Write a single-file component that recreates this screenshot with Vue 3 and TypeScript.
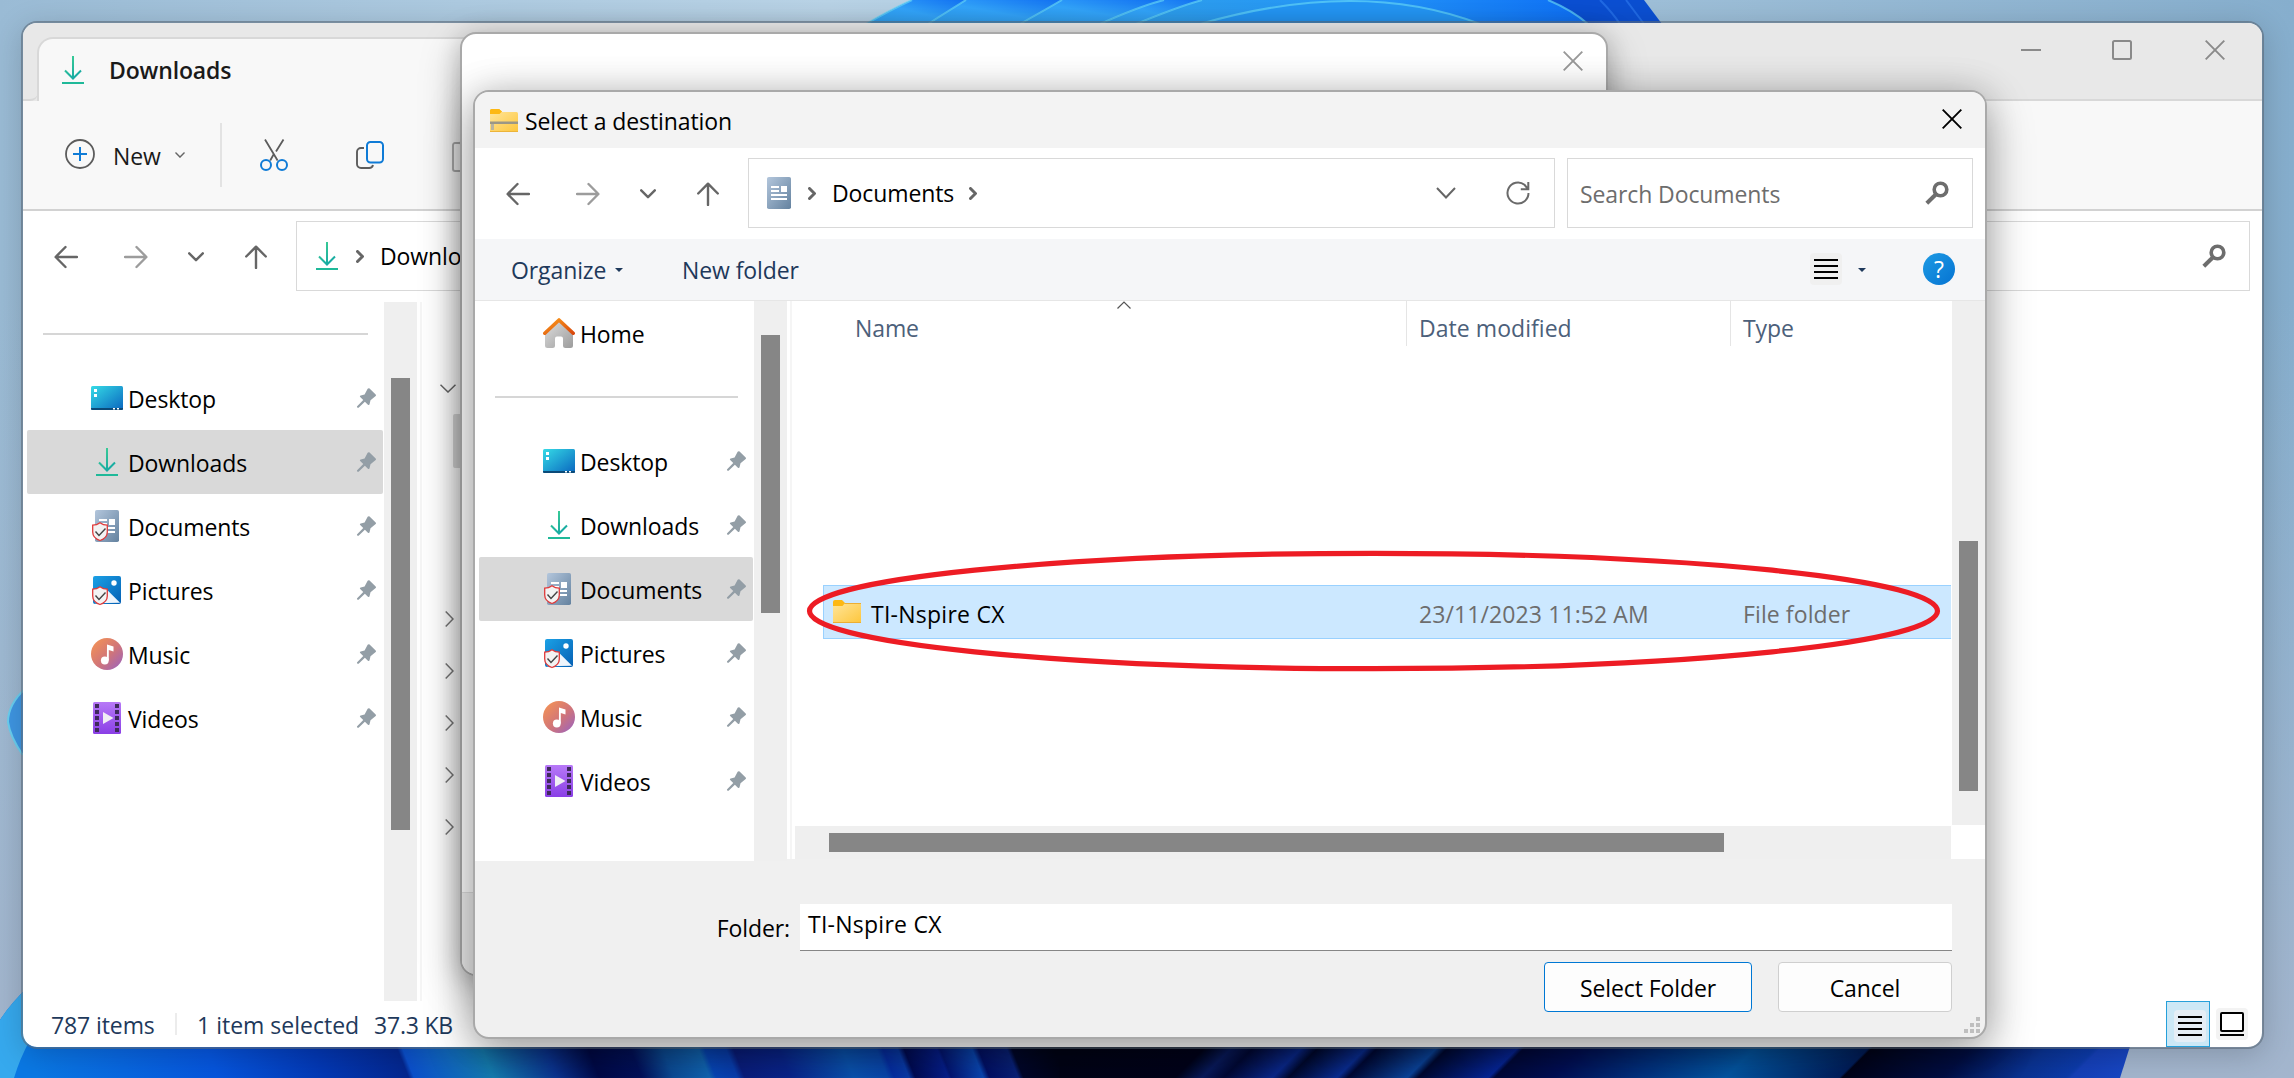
<script setup lang="ts">
interface NavItem {
  label: string
  icon: string
  pinned: boolean
}

const quickAccess: NavItem[] = [
  { label: 'Desktop', icon: 'desktop', pinned: true },
  { label: 'Downloads', icon: 'download', pinned: true },
  { label: 'Documents', icon: 'document-sync', pinned: true },
  { label: 'Pictures', icon: 'pictures-sync', pinned: true },
  { label: 'Music', icon: 'music', pinned: true },
  { label: 'Videos', icon: 'videos', pinned: true },
]

const collapsedGroups: number[] = [1, 2, 3, 4, 5]
const gripRows: number[] = [1, 2, 3]
</script>

<template>
  <div class="desktop">
    <!-- Shared icon shapes -->
    <svg class="defs" width="0" height="0" aria-hidden="true">
      <defs>
        <linearGradient id="gDown2" gradientUnits="userSpaceOnUse" x1="6" y1="2" x2="24" y2="28"><stop offset="0" stop-color="#42d392" /><stop offset="1" stop-color="#0a9fa8" /></linearGradient>
        <linearGradient id="gDesk" x1="0" y1="0" x2="1" y2="1"><stop offset="0" stop-color="#35dbe6" /><stop offset="1" stop-color="#0a66bf" /></linearGradient>
        <linearGradient id="gDoc" x1="0" y1="0" x2="1" y2="1"><stop offset="0" stop-color="#b3c6dc" /><stop offset="1" stop-color="#64829f" /></linearGradient>
        <linearGradient id="gPic" x1="0" y1="0" x2="1" y2="1"><stop offset="0" stop-color="#1ba1e6" /><stop offset="1" stop-color="#0560b4" /></linearGradient>
        <linearGradient id="gMusic" x1="0.1" y1="0.1" x2="0.9" y2="0.9"><stop offset="0" stop-color="#f19058" /><stop offset="0.55" stop-color="#d17578" /><stop offset="1" stop-color="#a366b4" /></linearGradient>
        <linearGradient id="gVid" x1="0" y1="0" x2="0" y2="1"><stop offset="0" stop-color="#b779f7" /><stop offset="1" stop-color="#8a3fe6" /></linearGradient>
        <linearGradient id="gRoof" x1="0" y1="0" x2="1" y2="1"><stop offset="0" stop-color="#fb9a1c" /><stop offset="1" stop-color="#d9480c" /></linearGradient>
        <linearGradient id="gWall" x1="0" y1="0" x2="1" y2="1"><stop offset="0" stop-color="#dedede" /><stop offset="1" stop-color="#9c9c9c" /></linearGradient>
        <linearGradient id="gFold" x1="0" y1="0" x2="1" y2="1"><stop offset="0" stop-color="#ffe59a" /><stop offset="1" stop-color="#fdc63c" /></linearGradient>

        <symbol id="i-download" viewBox="0 0 32 32">
          <path d="M16 2v22M8 16.5l8 8 8-8" fill="none" stroke="url(#gDown2)" stroke-width="2" />
          <path d="M5 28h22v2H5z" fill="#1fb999" />
        </symbol>
        <symbol id="i-desktop" viewBox="0 0 32 32">
          <rect y="4" width="32" height="24" rx="1.5" fill="url(#gDesk)" />
          <path d="M0 26h32v.8a1.2 1.2 0 0 1-1.2 1.2H1.200A1.200 1.200 0 0 1 0 26.800z" fill="#0b4a78" />
          <path d="M3 7h3v3H3zM3 12h3v3H3zM22 26h2v1.500h-2zM26 26h2v1.500h-2z" fill="#fff" />
        </symbol>
        <symbol id="i-document" viewBox="0 0 32 32">
          <rect x="4" width="24" height="32" rx="1.800" fill="url(#gDoc)" />
          <path d="M8 9h8v2H8zM8 13h8v2H8zM18 9h6v6h-6zM8 17h16v2H8zM8 21h16v2H8z" fill="#fff" />
        </symbol>
        <symbol id="i-shield" viewBox="0 0 32 32">
          <path d="M9 12.700c-2.300 1.700-4.600 2.400-7.300 2.500v6.800c0 4 3 7 7.300 8.500 4.300-1.500 7.300-4.500 7.300-8.500v-6.800c-2.700-.1-5-.8-7.300-2.500z" fill="#f3f3f3" stroke="#e03a3a" stroke-width="1.300" />
          <path d="M4.500 21.500l3.500 4 6.500-7" fill="none" stroke="#444" stroke-width="1.400" />
        </symbol>
        <symbol id="i-document-sync" viewBox="0 0 32 32">
          <use href="#i-document" /><use href="#i-shield" />
        </symbol>
        <symbol id="i-pictures-sync" viewBox="0 0 32 32">
          <rect x="2" y="2" width="28" height="28" rx="2" fill="url(#gPic)" />
          <circle cx="23" cy="9" r="2.700" fill="#fff" />
          <path d="M4 29.200L17 16.800l12 11.900z" fill="#eef5fc" />
          <use href="#i-shield" />
        </symbol>
        <symbol id="i-music" viewBox="0 0 32 32">
          <circle cx="16" cy="16" r="16" fill="url(#gMusic)" />
          <path d="M16 6.500l6.500 2v5L17.800 12v10.500h-1.900z" fill="#fff" />
          <circle cx="13.800" cy="22.500" r="3.900" fill="#fff" />
        </symbol>
        <symbol id="i-videos" viewBox="0 0 32 32">
          <rect x="2" width="28" height="32" rx="1.500" fill="url(#gVid)" />
          <path d="M4 2h4v4H4zM4 8h4v4H4zM4 14h4v4H4zM4 20h4v4H4zM4 26h4v4H4zM24 2h4v4h-4zM24 8h4v4h-4zM24 14h4v4h-4zM24 20h4v4h-4zM24 26h4v4h-4z" fill="#3f2a5c" />
          <path d="M12 10l10.500 6L12 22z" fill="#f0eef4" />
        </symbol>
        <symbol id="i-home" viewBox="0 0 32 32">
          <path d="M2 14L16 4l14 10v14.500a2.500 2.500 0 0 1-2.500 2.500h-5a2.500 2.500 0 0 1-2.500-2.500v-7a2 2 0 0 0-2-2h-4a2 2 0 0 0-2 2v7A2.500 2.500 0 0 1 9.500 31h-5A2.500 2.500 0 0 1 2 28.500z" fill="url(#gWall)" />
          <path d="M1.800 16.200L16 3l14.200 13.200" fill="none" stroke="url(#gRoof)" stroke-width="3.600" stroke-linecap="round" stroke-linejoin="round" />
        </symbol>
        <symbol id="i-pin" viewBox="0 0 22 22">
          <path d="M12.200.8c.6-.8 1.400-.8 2-.2l6.400 6.300c.6.600.5 1.300-.3 1.800l-5.100 4.100-1 4.200c-.2.900-1 1.200-1.700.5l-3.200-3.200-6.600 6.300c-.8.700-2.300-.6-1.500-1.500l6.400-6.600-3.200-3.100c-.6-.7-.3-1.500.6-1.600l4-.9z" fill="#939ea6" />
        </symbol>
        <symbol id="i-back" viewBox="0 0 24 24">
          <path d="M23 12H2M11.500 2L1.600 12l9.900 10" fill="none" stroke="currentColor" stroke-width="2.400" stroke-linecap="round" stroke-linejoin="round" />
        </symbol>
        <symbol id="i-up" viewBox="0 0 22 24">
          <path d="M11 23V2M1.200 11.500L11 1.700l9.800 9.800" fill="none" stroke="currentColor" stroke-width="2.400" stroke-linecap="round" stroke-linejoin="round" />
        </symbol>
        <symbol id="i-chev-down" viewBox="0 0 16 10">
          <path d="M1.200 1.300L8 8.200l6.800-6.900" fill="none" stroke="currentColor" stroke-width="2.400" stroke-linecap="round" stroke-linejoin="round" />
        </symbol>
        <symbol id="i-chev-bold" viewBox="0 0 8 13">
          <path d="M1.500 1.500l5 5-5 5" fill="none" stroke="currentColor" stroke-width="3" stroke-linecap="round" />
        </symbol>
        <symbol id="i-search" viewBox="0 0 24 24">
          <circle cx="15.500" cy="8.500" r="6.300" fill="none" stroke="currentColor" stroke-width="3.600" />
          <path d="M11 13.200L1.800 22.200" fill="none" stroke="currentColor" stroke-width="4" />
        </symbol>
        <symbol id="i-close" viewBox="0 0 20 20">
          <path d="M.7.7l18.600 18.600M19.300.7L.7 19.300" fill="none" stroke="currentColor" stroke-width="1.900" />
        </symbol>
        <symbol id="i-lines" viewBox="0 0 32 32">
          <path d="M4 6h24v2H4zM4 12h24v2H4zM4 18h24v2H4zM4 24h24v2H4z" fill="#000" />
        </symbol>
      </defs>
    </svg>

    <!-- Desktop wallpaper -->
    <svg class="wallpaper" width="2294" height="1078" viewBox="0 0 2294 1078">
      <defs>
        <linearGradient id="sky" x1="0" y1="0" x2="1" y2="0">
          <stop offset="0" stop-color="#9abbd5" /><stop offset="0.2" stop-color="#adcae0" /><stop offset="0.36" stop-color="#b9d3e6" /><stop offset="0.72" stop-color="#9ebfd8" /><stop offset="1" stop-color="#86aecd" />
        </linearGradient>
        <linearGradient id="skyLow" x1="0" y1="0" x2="0" y2="1">
          <stop offset="0" stop-color="#a3b8d0" stop-opacity="0" /><stop offset="1" stop-color="#a3b5cd" stop-opacity="1" />
        </linearGradient>
        <linearGradient id="petal" x1="0" y1="1" x2="1" y2="0">
          <stop offset="0" stop-color="#2f9fee" /><stop offset="0.5" stop-color="#33a5fb" /><stop offset="1" stop-color="#1270f2" />
        </linearGradient>
        <linearGradient id="petalWide" x1="0" y1="0" x2="1" y2="0">
          <stop offset="0" stop-color="#2f9fec" /><stop offset="0.5" stop-color="#2496f8" /><stop offset="1" stop-color="#0f70f6" />
        </linearGradient>
        <linearGradient id="lowLeft" gradientUnits="userSpaceOnUse" x1="0" y1="0" x2="1060" y2="0" gradientTransform="translate(-425 0) skewX(21.8)">
          <stop offset="0.03" stop-color="#0a78e4" /><stop offset="0.2" stop-color="#0655dc" /><stop offset="0.3" stop-color="#0338b4" /><stop offset="0.38" stop-color="#04278f" />
          <stop offset="0.385" stop-color="#0b50cc" /><stop offset="0.46" stop-color="#167fb4" /><stop offset="0.52" stop-color="#0c3696" /><stop offset="0.56" stop-color="#020b4c" /><stop offset="0.6" stop-color="#04125e" />
          <stop offset="0.63" stop-color="#0d4f9c" /><stop offset="0.664" stop-color="#1268b8" /><stop offset="0.67" stop-color="#0848bc" /><stop offset="0.69" stop-color="#0a40b4" /><stop offset="0.697" stop-color="#0b1f82" /><stop offset="0.74" stop-color="#0a2690" /><stop offset="0.8" stop-color="#0b55b4" />
          <stop offset="0.832" stop-color="#0a48b0" /><stop offset="0.838" stop-color="#0730a8" /><stop offset="0.852" stop-color="#0a3cac" /><stop offset="0.858" stop-color="#030d58" /><stop offset="0.889" stop-color="#072090" /><stop offset="0.892" stop-color="#051878" />
          <stop offset="0.922" stop-color="#0b49b8" /><stop offset="0.928" stop-color="#04126a" /><stop offset="0.955" stop-color="#0a237c" /><stop offset="0.96" stop-color="#02082c" /><stop offset="1" stop-color="#010518" />
        </linearGradient>
        <linearGradient id="lowRight" gradientUnits="userSpaceOnUse" x1="1060" y1="0" x2="2140" y2="0" gradientTransform="translate(1063 0) skewX(-45)">
          <stop offset="0" stop-color="#010518" /><stop offset="0.12" stop-color="#01041c" /><stop offset="0.145" stop-color="#0a1c60" /><stop offset="0.165" stop-color="#030a38" /><stop offset="0.21" stop-color="#0b2a90" /><stop offset="0.225" stop-color="#020a30" />
          <stop offset="0.27" stop-color="#0b2f98" /><stop offset="0.28" stop-color="#020a38" /><stop offset="0.335" stop-color="#0c46a0" /><stop offset="0.345" stop-color="#020a34" /><stop offset="0.41" stop-color="#07279c" /><stop offset="0.416" stop-color="#020a3c" />
          <stop offset="0.47" stop-color="#021058" /><stop offset="0.55" stop-color="#033484" /><stop offset="0.63" stop-color="#0559a8" /><stop offset="0.735" stop-color="#032060" /><stop offset="0.738" stop-color="#01051c" />
          <stop offset="0.83" stop-color="#020f46" /><stop offset="0.9" stop-color="#0a3290" /><stop offset="0.945" stop-color="#0c3aa8" /><stop offset="0.95" stop-color="#153fb6" /><stop offset="1" stop-color="#1747c4" />
        </linearGradient>
      </defs>
      <rect width="2294" height="1078" fill="url(#sky)" />
      <rect y="300" width="2294" height="778" fill="url(#skyLow)" />
      <path d="M866 24Q890 10 912 0H1644L1662 24z" fill="#0b4fd2" />
      <path d="M866 24Q890 10 912 0H966Q950 10 928 24z" fill="url(#petal)" />
      <path d="M928 24Q950 10 966 0H1062Q1045 10 1020 24z" fill="url(#petal)" />
      <path d="M1020 24Q1045 10 1062 0H1164Q1140 6 1100 24z" fill="url(#petal)" />
      <path d="M1100 24Q1140 6 1164 0H1202Q1180 6 1136 24z" fill="url(#petal)" />
      <path d="M1136 24Q1180 6 1202 0H1548Q1572 10 1588 24z" fill="url(#petalWide)" />
      <path d="M1200 24Q1360 -22 1480 24z" fill="#2496f4" />
      <path d="M866 24Q890 10 912 0M928 24Q950 10 966 0M1020 24Q1045 10 1062 0M1100 24Q1140 6 1164 0M1136 24Q1180 6 1202 0M1200 24Q1360 -22 1480 24M1548 0Q1572 10 1588 24" fill="none" stroke="#62d4f8" stroke-opacity="0.7" stroke-width="2" />
      <path d="M1600 0Q1612 12 1620 24M1626 0L1644 24" fill="none" stroke="#2f7cf0" stroke-opacity="0.6" stroke-width="2" />
      <path d="M26 688Q8 704 8 722q2 14 14 32h6z" fill="#3f97e4" stroke="#6ad0f2" stroke-width="2" />
      <path d="M0 1020Q10 1004 30 985V1040H1060V1078H0z" fill="url(#lowLeft)" />
      <path d="M0 1020Q10 1004 30 985V1040Q20 1058 14 1078H0z" fill="#36a9ee" />
      <path d="M1059 1040H2132L2120 1078H1059z" fill="url(#lowRight)" />
    </svg>

    <!-- Explorer window -->
    <section class="window explorer">
      <header class="tabstrip">
        <div class="tab-lead"></div>
        <div class="tab">
          <svg width="32" height="32"><use href="#i-download" /></svg>
          <span>Downloads</span>
        </div>
        <div class="captions">
          <svg width="20" height="20"><path d="M0 10h20" stroke="#8a8a8a" stroke-width="2" /></svg>
          <svg class="max" width="20" height="20"><rect x="1" y="1" width="18" height="18" rx="1.500" fill="none" stroke="#8a8a8a" stroke-width="2" /></svg>
          <svg width="20" height="20"><use href="#i-close" /></svg>
        </div>
      </header>

      <div class="commands">
        <svg class="plus" width="30" height="30" viewBox="0 0 30 30" fill="none">
          <circle cx="15" cy="15" r="14" stroke="#5c5c5c" stroke-width="1.800" />
          <path d="M15 8v14M8 15h14" stroke="#0f7bd6" stroke-width="2" />
        </svg>
        <span class="new">New</span>
        <svg class="new-chev" width="10" height="6" viewBox="0 0 10 6"><path d="M.5.6L5 5.100 9.500.6" fill="none" stroke="#666" stroke-width="1.400" /></svg>
        <i class="divider"></i>
        <svg class="cut" width="28" height="32" viewBox="0 0 28 32" fill="none">
          <path d="M5 .5l12.600 21M23.500.5L16 12.500M13.600 15.500L10.200 21.500" stroke="#5c5c5c" stroke-width="1.800" />
          <circle cx="6" cy="26" r="5" stroke="#0f7bd6" stroke-width="2" /><circle cx="22" cy="26" r="5" stroke="#0f7bd6" stroke-width="2" />
        </svg>
        <svg class="copy" width="28" height="28" viewBox="0 0 28 28" fill="none">
          <path d="M8 7H5a4 4 0 0 0-4 4v12a4 4 0 0 0 4 4h8a4 4 0 0 0 4-3" stroke="#5c5c5c" stroke-width="1.900" />
          <rect x="11" y="1" width="16" height="20.500" rx="3.500" stroke="#0f7bd6" stroke-width="2" />
        </svg>
        <svg class="paste" width="28" height="32" viewBox="0 0 28 32" fill="none" stroke="#ababab" stroke-width="1.900">
          <path d="M8 3H3a2 2 0 0 0-2 2v24a2 2 0 0 0 2 2h9M8 3a3 3 0 0 1 3-2h5v4h-5a3 3 0 0 1-3-2z" />
        </svg>
      </div>

      <div class="navbar">
        <svg class="ic back" width="24" height="24"><use href="#i-back" /></svg>
        <svg class="ic fwd" width="24" height="24"><use href="#i-back" /></svg>
        <svg class="ic recent" width="16" height="10"><use href="#i-chev-down" /></svg>
        <svg class="ic up" width="22" height="24"><use href="#i-up" /></svg>
        <div class="field address">
          <svg width="32" height="32"><use href="#i-download" /></svg>
          <svg class="crumb" width="8" height="13"><use href="#i-chev-bold" /></svg>
          <span>Downloads</span>
        </div>
        <div class="field search wide">
          <svg width="24" height="24"><use href="#i-search" /></svg>
        </div>
      </div>

      <div class="body">
        <nav class="sidebar">
          <div class="rule"></div>
          <div v-for="item in quickAccess" :key="item.label" class="nav-item" :class="{ selected: item.label === 'Downloads' }">
            <svg width="32" height="32"><use :href="'#i-' + item.icon" /></svg>
            <span>{{ item.label }}</span>
            <svg v-if="item.pinned" class="pin" width="21" height="21"><use href="#i-pin" /></svg>
          </div>
        </nav>
        <div class="scroll nav-scroll"><div class="thumb"></div></div>
        <div class="splitter"></div>
        <div class="groups">
          <div class="group first"><svg width="16" height="9" viewBox="0 0 16 9"><path d="M.5.700L8 8 15.500.700" fill="none" stroke="#666" stroke-width="1.500" /></svg></div>
          <div class="row-strip"></div>
          <div class="group-list">
            <div v-for="n in collapsedGroups" :key="n" class="group"><svg width="9" height="16" viewBox="0 0 9 16"><path d="M.7.500L8 8 .7 15.500" fill="none" stroke="#777" stroke-width="1.500" /></svg></div>
          </div>
        </div>
      </div>

      <footer class="status">
        <span class="count">787 items</span>
        <i></i>
        <span class="sel">1 item selected</span>
        <span class="size">37.3 KB</span>
        <div class="views">
          <div class="view active"><svg width="32" height="32"><rect width="32" height="32" rx="4" fill="#e5eef6" /><use href="#i-lines" /></svg></div>
          <div class="view"><svg width="32" height="32"><rect width="32" height="32" rx="4" fill="#f3f3f3" /><rect x="5" y="5" width="22" height="18" rx="1" fill="#fff" stroke="#000" stroke-width="2" /><path d="M4 26h24v2H4z" /></svg></div>
        </div>
      </footer>
    </section>

    <!-- Dialog partly hidden behind the picker -->
    <section class="window progress">
      <header><svg width="20" height="20"><use href="#i-close" /></svg></header>
      <footer></footer>
    </section>

    <!-- Folder picker -->
    <section class="window picker">
      <header class="title">
        <svg width="28" height="23" viewBox="0 0 28 23">
          <path d="M0 2a2 2 0 0 1 2-2h7l3 3v4H0z" fill="#fdb813" />
          <rect y="3" width="28" height="20" rx="1.500" fill="url(#gFold)" />
          <path d="M0 2a2 2 0 0 1 2-2h7l3 2.500L9.500 5H0z" fill="#fdb813" />
          <path d="M0 12.500h28v2.500H0z" fill="#9b9786" /><path d="M1 15h3v6H1z" fill="#bab49e" /><path d="M0 22h28v1H0z" fill="#ecb43a" />
        </svg>
        <span>Select a destination</span>
        <svg class="x" width="20" height="20"><use href="#i-close" /></svg>
      </header>

      <div class="navbar">
        <svg class="ic back" width="24" height="24"><use href="#i-back" /></svg>
        <svg class="ic fwd" width="24" height="24"><use href="#i-back" /></svg>
        <svg class="ic recent" width="16" height="10"><use href="#i-chev-down" /></svg>
        <svg class="ic up" width="22" height="24"><use href="#i-up" /></svg>
        <div class="field address">
          <svg width="32" height="32"><use href="#i-document" /></svg>
          <svg class="crumb" width="8" height="13"><use href="#i-chev-bold" /></svg>
          <span>Documents</span>
          <svg class="crumb tail" width="8" height="13"><use href="#i-chev-bold" /></svg>
          <svg class="drop" width="20" height="12" viewBox="0 0 20 12"><path d="M1 1l9 9.500L19 1" fill="none" stroke="#666" stroke-width="2" /></svg>
          <svg class="refresh" width="24" height="24" viewBox="0 0 24 24"><path d="M22.500 12A10.500 10.500 0 1 1 18.500 3.800L21.500 7.500M22.300 1v7.300h-7.500" fill="none" stroke="#6a6a6a" stroke-width="2" /></svg>
        </div>
        <div class="field search">
          <span>Search Documents</span>
          <svg width="24" height="24"><use href="#i-search" /></svg>
        </div>
      </div>

      <div class="toolbar">
        <span class="organize">Organize</span>
        <svg class="caret" width="8" height="4"><path d="M0 0h8L4 4z" fill="#1e395b" /></svg>
        <span class="new-folder">New folder</span>
        <svg class="list" width="32" height="32"><rect width="32" height="32" rx="4" fill="#f0f0f0" /><use href="#i-lines" /></svg>
        <svg class="caret" width="8" height="4"><path d="M0 0h8L4 4z" fill="#1e395b" /></svg>
        <div class="help">?</div>
      </div>

      <div class="body">
        <nav class="sidebar">
          <div class="nav-item">
            <svg width="32" height="32"><use href="#i-home" /></svg>
            <span>Home</span>
          </div>
          <div class="rule"></div>
          <div v-for="item in quickAccess" :key="item.label" class="nav-item" :class="{ selected: item.label === 'Documents' }">
            <svg width="32" height="32"><use :href="'#i-' + item.icon" /></svg>
            <span>{{ item.label }}</span>
            <svg v-if="item.pinned" class="pin" width="21" height="21"><use href="#i-pin" /></svg>
          </div>
        </nav>
        <div class="scroll nav-scroll"><div class="thumb"></div></div>
        <div class="splitter"></div>
        <div class="files">
          <div class="files-main">
            <div class="columns">
              <div class="col name">Name
                <svg class="sort" width="14" height="8" viewBox="0 0 14 8"><path d="M.5 7.500L7 1l6.500 6.500" fill="none" stroke="#555" stroke-width="1.200" /></svg>
              </div>
              <div class="col date">Date modified</div>
              <div class="col type">Type</div>
            </div>
            <div class="file">
              <svg width="28" height="23" viewBox="0 0 28 23">
                <rect y="3" width="28" height="20" rx="1.500" fill="url(#gFold)" />
                <path d="M0 2a2 2 0 0 1 2-2h7l3 3-2.500 3H0z" fill="#fdb813" />
                <path d="M12 3h16v1H11zM0 22h28v1H0z" fill="#ecae33" />
              </svg>
              <span class="fname">TI-Nspire CX</span>
              <span class="fdate">23/11/2023 11:52 AM</span>
              <span class="ftype">File folder</span>
            </div>
            <div class="hscroll"><div class="thumb"></div></div>
          </div>
          <div class="vside">
            <div class="scroll vscroll"><div class="thumb"></div></div>
          </div>
        </div>
      </div>

      <footer class="actions">
        <div class="name-row">
          <label>Folder:</label>
          <div class="input">TI-Nspire CX</div>
        </div>
        <div class="buttons">
          <button class="primary">Select Folder</button>
          <button>Cancel</button>
        </div>
        <div class="grip">
          <div v-for="r in gripRows" :key="r"><b v-for="c in r" :key="c"></b></div>
        </div>
      </footer>

      <svg class="marker" width="1136" height="124" viewBox="0 0 1136 124">
        <ellipse cx="568.500" cy="62" rx="564" ry="57.700" fill="none" stroke="#ed1c24" stroke-width="5.200" />
      </svg>
    </section>
  </div>
</template>

<style>
body {
  margin: 0;
  overflow: hidden;
}
</style>

<style scoped>
* {
  box-sizing: border-box;
}
.desktop {
  position: relative;
  width: 2294px;
  height: 1078px;
  overflow: hidden;
  font-family: 'Open Sans', 'Noto Sans', sans-serif;
  font-size: 23px;
  line-height: 32px;
  letter-spacing: -0.1px;
  color: #000;
  white-space: nowrap;
}
svg {
  flex: none;
  display: block;
}
.defs,
.wallpaper {
  position: absolute;
  left: 0;
  top: 0;
}
.window {
  position: absolute;
  display: flex;
  flex-direction: column;
  border-radius: 16px;
  background-clip: padding-box;
  overflow: hidden;
}

/* Explorer */
.explorer {
  left: 21px;
  top: 21px;
  width: 2243px;
  height: 1028px;
  background-color: #fff;
  border: 2px solid rgba(90, 105, 120, 0.6);
  box-shadow: 0 6px 30px rgba(0, 0, 0, 0.18);
}
.tabstrip {
  height: 78px;
  display: flex;
  background: #e8e8e8;
  flex: none;
}
.tab-lead {
  width: 15px;
  border-bottom: 2px solid #d8d8d8;
  border-bottom-right-radius: 8px;
}
.tab {
  margin-top: 14px;
  margin-left: -1px;
  width: 900px;
  border: 2px solid #d8d8d8;
  border-bottom: 0;
  border-radius: 16px 16px 0 0;
  background: #f8f8f8;
  display: flex;
  align-items: center;
  padding: 0 0 0 18px;
  font-weight: 600;
  color: #1a1a1a;
}
.tab span {
  margin-left: 20px;
  letter-spacing: -0.15px;
}
.captions {
  flex: 1;
  display: flex;
  justify-content: flex-end;
  gap: 72px;
  padding: 17px 37px 0 0;
  border-bottom: 2px solid #d8d8d8;
  color: #8a8a8a;
}
.max {
  margin: 0 1px 0 -1px;
}
.commands {
  height: 110px;
  flex: none;
  background: #f8f8f8;
  border-bottom: 2px solid #d2d2d2;
  display: flex;
  align-items: flex-start;
  padding: 22px 0 0 42px;
}
.plus {
  margin-top: 16px;
}
.new {
  margin: 17px 0 0 18px;
  width: 49px;
  color: #1a1a1a;
}
.new-chev {
  margin: 29px 0 0 13px;
}
.divider {
  width: 2px;
  height: 64px;
  margin-left: 35px;
  background: #e3e3e3;
}
.cut {
  margin: 16px 0 0 38px;
}
.copy {
  margin: 18px 0 0 68px;
}
.paste {
  margin: 17px 0 0 68px;
}

/* Navigation bar shared by both windows */
.navbar {
  height: 91px;
  flex: none;
  display: flex;
  align-items: center;
  padding: 0 12px 1px 31px;
  background: #fff;
}
.ic {
  color: #666;
  position: relative;
  top: 1px;
}
.fwd {
  margin-left: 46px;
  transform: scaleX(-1);
  color: #9c9c9c;
}
.recent {
  margin-left: 40px;
}
.up {
  margin: 0 29px 0 41px;
}
.field {
  height: 70px;
  border: 1px solid #d9d9d9;
  display: flex;
  align-items: center;
}
.address {
  width: 807px;
  padding-left: 14px;
  margin-right: 12px;
}
.address span {
  margin-left: 16px;
}
.crumb {
  color: #666;
  margin-left: 13px;
}
.crumb.tail {
  margin-left: 15px;
}
.drop {
  margin-left: auto;
}
.refresh {
  margin: 0 24px 0 50px;
}
.search {
  flex: 1;
  justify-content: space-between;
  padding: 0 23px 0 12px;
  color: #6d6d6d;
}
.search.wide {
  justify-content: flex-end;
}
.search span {
  padding-top: 1px;
}

/* Side navigation */
.body {
  flex: none;
  display: flex;
  background: #fff;
}
.sidebar {
  flex: none;
  background: #fff;
}
.rule {
  height: 64px;
  padding: 31px 16px 0 20px;
}
.rule::before {
  content: '';
  display: block;
  height: 2px;
  background: #d6d6d6;
}
.nav-item {
  height: 64px;
  margin: 0 1px 0 4px;
  padding: 0 6px 0 64px;
  border-radius: 2px;
  display: flex;
  align-items: center;
}
.nav-item span {
  margin-left: 5px;
  padding-top: 2px;
}
.nav-item.selected {
  background: #d9d9d9;
}
.pin {
  margin-left: auto;
}
.scroll {
  width: 33px;
  flex: none;
  background: #efefef;
}
.thumb {
  background: #868686;
}
.scroll .thumb {
  width: 19px;
  margin-left: 7px;
}
.splitter {
  width: 2px;
  margin-left: 3px;
  background: #f5f5f5;
  flex: none;
}
.explorer .body {
  height: 699px;
}
.explorer .sidebar {
  width: 361px;
}
.explorer .thumb {
  height: 452px;
  margin-top: 76px;
}
.groups {
  padding-top: 60px;
}
.group {
  height: 52px;
  padding-left: 23px;
  display: flex;
  align-items: center;
}
.group.first {
  padding-left: 18px;
}
.row-strip {
  width: 300px;
  height: 54px;
  margin-left: 31px;
  border-radius: 2px;
  background: #d9d9d9;
}
.group-list {
  margin-top: 125px;
}
.status {
  flex: 1;
  display: flex;
  align-items: center;
  padding-left: 28px;
  color: #1e395b;
}
.status span {
  padding-top: 1px;
}
.status i {
  width: 2px;
  height: 22px;
  background: #ececec;
  margin-left: 19px;
}
.count {
  width: 105px;
}
.sel {
  width: 177px;
  margin-left: 20px;
  letter-spacing: 0;
}
.size {
  letter-spacing: -0.2px;
}
.views {
  margin-left: auto;
  align-self: stretch;
  display: flex;
  padding-right: 14px;
}
.view {
  padding: 7px 0 0 6px;
}
.view.active {
  width: 44px;
  padding: 8px 0 0 7px;
  border: 1px solid #26a0da;
  background: #cce8f6;
}

/* Hidden dialog */
.progress {
  left: 460px;
  top: 32px;
  width: 1148px;
  height: 944px;
  border: 2px solid #a9a9a9;
  background: #fff;
  box-shadow: 0 14px 40px rgba(0, 0, 0, 0.28), 0 2px 24px rgba(0, 0, 0, 0.16);
}
.progress header {
  flex: 1;
  display: flex;
  justify-content: flex-end;
  padding: 17px 23px 0 0;
  color: #999;
}
.progress footer {
  height: 82px;
  border-top: 1px solid #dfdfdf;
  background: #f0f0f0;
}

/* Folder picker */
.picker {
  left: 473px;
  top: 90px;
  width: 1514px;
  height: 949px;
  border: 2px solid #a9a9a9;
  background: #f0f0f0;
  box-shadow: 0 16px 48px rgba(0, 0, 0, 0.3), 0 2px 36px rgba(0, 0, 0, 0.18);
}
.title {
  height: 56px;
  flex: none;
  display: flex;
  align-items: center;
  padding: 0 23px 0 15px;
  background: #f3f3f3;
}
.title span {
  margin-left: 7px;
  padding-top: 1px;
}
.title .x {
  margin: -2px 0 0 auto;
}
.toolbar {
  height: 62px;
  flex: none;
  display: flex;
  align-items: center;
  padding: 0 30px 0 36px;
  background: #f5f6f8;
  border-bottom: 1px solid #e6e6e6;
  color: #1e395b;
}
.organize {
  width: 98px;
}
.caret {
  margin-left: 6px;
}
.new-folder {
  margin-left: 59px;
}
.list {
  margin: -1px 0 0 auto;
}
.list + .caret {
  margin-left: 16px;
}
.help {
  width: 32px;
  height: 32px;
  margin: -1px 0 0 57px;
  border-radius: 50%;
  background: linear-gradient(135deg, #1e9be4, #0573d2);
  color: #fff;
  text-align: center;
}
.picker .body {
  height: 558px;
}
.picker .sidebar {
  width: 279px;
  height: 560px;
}
.picker .nav-scroll {
  height: 560px;
}
.picker .nav-scroll .thumb {
  height: 278px;
  margin-top: 34px;
}
.files {
  flex: 1;
  display: flex;
  background: #fff;
}
.files-main {
  flex: 1;
  display: flex;
  flex-direction: column;
  padding-left: 3px;
}
.columns {
  display: flex;
  height: 45px;
  color: #4c607a;
}
.col {
  padding: 11px 0 0 12px;
  border-left: 1px solid #e5e5e5;
}
.col.name {
  position: relative;
  width: 611px;
  padding-left: 60px;
  border-left: 0;
}
.col.date {
  width: 324px;
  letter-spacing: 0.05px;
}
.sort {
  position: absolute;
  left: 322px;
  top: 0;
}
.file {
  height: 54px;
  margin: 239px 0 0 28px;
  padding-left: 9px;
  display: flex;
  align-items: center;
  background: #cce8ff;
  border: 1px solid #99d1ff;
  border-right: 0;
  color: #6d6d6d;
}
.file svg {
  margin-top: -1px;
}
.file span {
  padding-top: 3px;
}
.file .fname {
  width: 548px;
  margin-left: 10px;
  color: #000;
  letter-spacing: 0.25px;
}
.file .fdate {
  width: 324px;
  letter-spacing: 0.1px;
}
.ftype {
  letter-spacing: 0.1px;
}
.hscroll {
  height: 33px;
  margin-top: auto;
  background: #efefef;
  padding: 7px 0 0 34px;
}
.hscroll .thumb {
  width: 895px;
  height: 19px;
}
.vside {
  width: 34px;
  padding-left: 1px;
}
.vscroll {
  height: 524px;
  padding-top: 240px;
}
.vscroll .thumb {
  height: 250px;
}
.actions {
  flex: 1;
  position: relative;
  padding: 45px 33px 0 0;
}
.name-row {
  display: flex;
  align-items: center;
  justify-content: flex-end;
}
.name-row label {
  margin-right: 10px;
  padding-top: 1px;
}
.input {
  width: 1152px;
  height: 47px;
  padding: 4px 8px;
  background: #fff;
  border-bottom: 1px solid #868686;
  letter-spacing: 0.25px;
}
.buttons {
  display: flex;
  justify-content: flex-end;
  gap: 26px;
  margin-top: 11px;
}
button {
  width: 174px;
  height: 50px;
  padding: 1px 0 0;
  border: 1px solid #cfcfcf;
  border-radius: 4px;
  background: #fdfdfd;
  font: inherit;
  letter-spacing: inherit;
  color: #000;
}
button.primary {
  width: 208px;
  border-color: #0078d4;
}
.grip {
  position: absolute;
  right: 5px;
  bottom: 4px;
}
.grip div {
  display: flex;
  justify-content: flex-end;
  gap: 2px;
  margin-top: 2px;
}
.grip b {
  width: 4px;
  height: 4px;
  background: #bfbfbf;
}
.marker {
  position: absolute;
  left: 330px;
  top: 457px;
}
</style>
